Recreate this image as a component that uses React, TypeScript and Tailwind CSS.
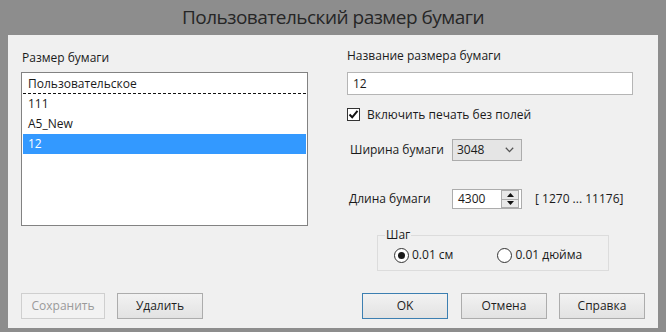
import React from "react";

const font = { fontFamily: '"Open Sans", "Noto Sans", sans-serif' };

function Btn({ children, disabled, primary, w }: { children: React.ReactNode; disabled?: boolean; primary?: boolean; w: string }) {
  const base = "h-[26px] flex items-center justify-center text-[12px] border";
  let cls = "";
  if (disabled) cls = "border-[#cfcfcf] bg-[#f2f2f2] text-[#9a9a9a]";
  else if (primary) cls = "border-[#3c7fb1] bg-gradient-to-b from-[#f2f2f2] to-[#e2e2e2] text-[#1e1e1e]";
  else cls = "border-[#acacac] bg-gradient-to-b from-[#f2f2f2] to-[#e2e2e2] text-[#1e1e1e]";
  return <div className={`${base} ${cls} ${w}`}>{children}</div>;
}

export default function App() {
  return (
    <div className="w-[666px] h-[332px] bg-[#8d8d8d] flex flex-col overflow-hidden" style={font}>
      <div className="h-[35px] flex items-center justify-center text-[19px] text-[#262626] font-normal pb-[1px] tracking-[-0.5px]">
        Пользовательский размер бумаги
      </div>
      <div className="mx-[8px] mb-[4px] flex-1 bg-[#f0f0f0] flex flex-col px-[13px] pt-[11px] pb-[9px] text-[12px] text-[#1a1a1a]">
        <div className="flex flex-1">
          {/* Left column */}
          <div className="w-[287px] flex flex-col">
            <div className="h-[26px] pl-[1px] leading-[16px] pt-[4px]">Размер бумаги</div>
            <div className="h-[154px] border border-[#828282] bg-white p-[1px] flex flex-col">
              <div className="h-[20px] flex items-center pl-[5px] border-b border-dashed border-[#111] leading-[16px]">Пользовательское</div>
              <div className="h-[20px] flex items-center pl-[5px] leading-[16px]">111</div>
              <div className="h-[20px] flex items-center pl-[5px] leading-[16px]">A5_New</div>
              <div className="h-[20px] flex items-center pl-[5px] bg-[#3399ff] text-white leading-[16px]">12</div>
            </div>
          </div>
          {/* Right column */}
          <div className="ml-[39px] w-[287px] flex flex-col">
            <div className="h-[26px] leading-[16px] pt-[2px]">Название размера бумаги</div>
            <div className="h-[23px] w-[286px] border border-[#b5b5b5] bg-white flex items-center pl-[5px]">12</div>
            <div className="mt-[13px] h-[13px] flex items-center">
              <div className="w-[13px] h-[13px] border border-[#333] bg-white flex items-center justify-center">
                <svg width="11" height="11" viewBox="0 0 11 11">
                  <path d="M1.5 5.5 L4.2 8.3 L9.5 1.8" fill="none" stroke="#111" strokeWidth="2" />
                </svg>
              </div>
              <span className="ml-[7px] leading-[16px]">Включить печать без полей</span>
            </div>
            <div className="mt-[18px] h-[22px] flex items-center">
              <span className="w-[105px] pl-[3px]">Ширина бумаги</span>
              <div className="w-[70px] h-[22px] border border-[#acacac] bg-[#e5e5e5] flex items-center pl-[4px] pr-[7px] justify-between">
                <span>3048</span>
                <svg width="9" height="6" viewBox="0 0 9 6">
                  <path d="M0.8 0.8 L4.5 4.6 L8.2 0.8" fill="none" stroke="#555" strokeWidth="1.3" />
                </svg>
              </div>
            </div>
            <div className="mt-[28px] h-[20px] flex items-center">
              <span className="w-[105px] pl-[2px]">Длина бумаги</span>
              <div className="w-[70px] h-[20px] border border-[#acacac] bg-white flex items-center">
                <span className="flex-1 pl-[5px]">4300</span>
                <div className="w-[18px] h-[18px] mr-[2px] border border-[#acacac] bg-[#e8e8e8] flex flex-col">
                  <div className="flex-1 flex items-center justify-center border-b border-[#acacac]">
                    <svg width="7" height="4" viewBox="0 0 7 4"><path d="M0 4 L3.5 0 L7 4 Z" fill="#111" /></svg>
                  </div>
                  <div className="flex-1 flex items-center justify-center">
                    <svg width="7" height="4" viewBox="0 0 7 4"><path d="M0 0 L3.5 4 L7 0 Z" fill="#111" /></svg>
                  </div>
                </div>
              </div>
              <span className="ml-[13px]">[ 1270 ... 11176]</span>
            </div>
            <fieldset className="mt-[20px] ml-[30px] w-[232px] h-[42px] border border-[#dcdcdc] flex items-start">
              <legend className="ml-[7px] px-[1px] leading-[12px] text-[12px]">Шаг</legend>
              <div className="flex items-center ml-[16px] mt-[5px]">
                <div className="w-[15px] h-[15px] rounded-full border border-[#333] bg-white flex items-center justify-center">
                  <div className="w-[7px] h-[7px] rounded-full bg-[#1a1a1a]" />
                </div>
                <span className="ml-[3px]">0.01 см</span>
              </div>
              <div className="flex items-center ml-[44px] mt-[5px]">
                <div className="w-[15px] h-[15px] rounded-full border border-[#333] bg-white" />
                <span className="ml-[3px]">0.01 дюйма</span>
              </div>
            </fieldset>
          </div>
        </div>
        {/* Buttons */}
        <div className="flex h-[26px]">
          <Btn disabled w="w-[84px] ml-[0px]">Сохранить</Btn>
          <Btn w="w-[86px] ml-[12px]">Удалить</Btn>
          <div className="flex-1" />
          <Btn primary w="w-[86px]">OK</Btn>
          <Btn w="w-[86px] ml-[13px]">Отмена</Btn>
          <Btn w="w-[86px] ml-[12px]">Справка</Btn>
        </div>
      </div>
    </div>
  );
}
